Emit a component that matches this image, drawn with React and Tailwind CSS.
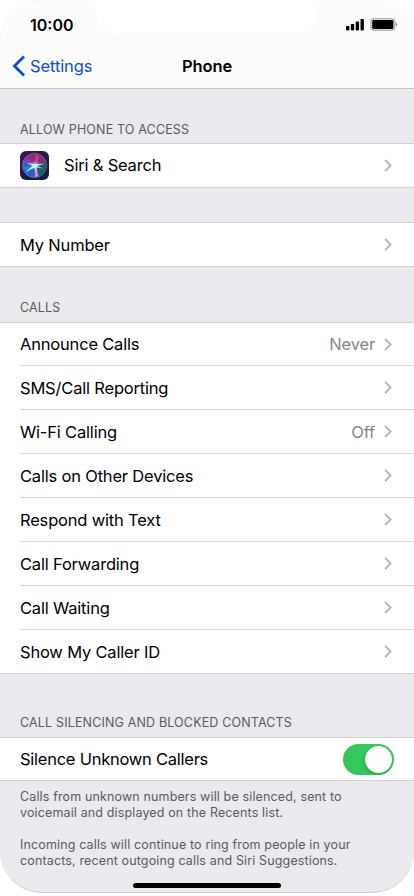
import React from 'react';

const callRows = [
  { label: 'Announce Calls', value: 'Never' },
  { label: 'SMS/Call Reporting' },
  { label: 'Wi-Fi Calling', value: 'Off' },
  { label: 'Calls on Other Devices' },
  { label: 'Respond with Text' },
  { label: 'Call Forwarding' },
  { label: 'Call Waiting' },
  { label: 'Show My Caller ID' },
];

function Chevron() {
  return (
    <svg width="8" height="13" viewBox="0 0 8 13" fill="none" className="shrink-0">
      <path d="M1.1 1L6.6 6.5L1.1 12" stroke="#b6b6b8" strokeWidth="1.9" />
    </svg>
  );
}

function SiriIcon() {
  return (
    <svg width="29" height="29" viewBox="0 0 29 29" className="mr-[15px] shrink-0">
      <defs>
        <linearGradient id="siriBg" x1="0" y1="0" x2="1" y2="1">
          <stop offset="0" stopColor="#43105a" />
          <stop offset="0.45" stopColor="#251d49" />
          <stop offset="1" stopColor="#101f3c" />
        </linearGradient>
        <linearGradient id="siriOrb" x1="0.1" y1="0.9" x2="0.7" y2="0.05">
          <stop offset="0" stopColor="#1567c0" />
          <stop offset="0.4" stopColor="#3f58b8" />
          <stop offset="0.65" stopColor="#8b2c8e" />
          <stop offset="1" stopColor="#8f2468" />
        </linearGradient>
        <radialGradient id="siriGlow">
          <stop offset="0" stopColor="#fff" />
          <stop offset="0.4" stopColor="#c4e8f5" stopOpacity="0.5" />
          <stop offset="1" stopColor="#63bdea" stopOpacity="0" />
        </radialGradient>
      </defs>
      <rect width="29" height="29" rx="6" fill="url(#siriBg)" />
      <circle cx="14.5" cy="14.5" r="12" fill="url(#siriOrb)" stroke="#777fa0" strokeWidth="0.8" />
      <path d="M15 14L25.8 11A12 12 0 0 1 19.5 25.5Z" fill="#15605f" opacity="0.85" />
      <path d="M15 14L15.5 4L19 5L17 14Z" fill="#d63f8e" opacity="0.85" />
      <path d="M15 14L7 6.5L4.5 11Z" fill="#9b3fb4" opacity="0.7" />
      <path d="M14 14L3.5 16L7 23Z" fill="#258be0" opacity="0.75" />
      <path d="M14.5 15L15 26L18.5 25Z" fill="#e68ad8" opacity="0.9" />
      <circle cx="15" cy="14.3" r="5" fill="url(#siriGlow)" />
      <path d="M6.5 12L15 13L25 12.8L17 15L24 17.8L16.3 16.2L17.5 23L14.5 16.8L6 20.8L12.5 14.8Z" fill="#c9f7f3" opacity="0.9" />
    </svg>
  );
}

function Row({ label, value, icon, textPad = 'pt-px' }) {
  return (
    <div className="flex h-[43px] items-center pr-[22px]">
      {icon}
      <span className={`grow text-[16.5px] tracking-[-0.19px] text-black ${textPad}`}>{label}</span>
      {value && <span className={`mr-[9px] text-[16.5px] tracking-[-0.15px] text-[#858589] ${textPad}`}>{value}</span>}
      <Chevron />
    </div>
  );
}

function GroupTitle({ children }) {
  return <h2 className="pl-5 text-[12.5px] leading-4 font-normal tracking-[0.16px] text-[#59595d]">{children}</h2>;
}

function StatusBar() {
  return (
    <div className="flex h-11 items-start justify-between pr-4 pl-[30px]">
      <span className="mt-[15px] text-[16px] leading-5 font-semibold text-black">10:00</span>
      <div className="mt-[18px] flex gap-[6px]">
        <svg width="19" height="13" viewBox="0 0 19 13">
          <rect x="1" y="8" width="3.4" height="4.4" rx="0.8" />
          <rect x="5.8" y="6" width="3.4" height="6.4" rx="0.8" />
          <rect x="10.7" y="3.6" width="3.4" height="8.8" rx="0.8" />
          <rect x="15.5" y="1" width="3.4" height="11.4" rx="0.8" />
        </svg>
        <svg width="28" height="13" viewBox="0 0 28 13">
          <rect x="0.9" y="0.8" width="23.8" height="11.4" rx="3.2" fill="#fcfcfc" stroke="#b4b4b4" strokeWidth="1.5" />
          <rect x="2.2" y="2.1" width="21.2" height="8.8" rx="1.4" />
          <path d="M25.9 4.4Q27.2 5 27.2 6.5Q27.2 8 25.9 8.6Z" fill="#929292" />
        </svg>
      </div>
    </div>
  );
}

export default function App() {
  return (
    <div className="h-[896px] w-[414px] overflow-hidden bg-white font-['Inter',sans-serif]">
      <div className="relative h-[893px] overflow-hidden rounded-[42px] border-b border-[#cacacd] bg-[#eae9ee]">
        <header className="relative h-[89px] border-b border-[#c3c3c7] bg-[#fcfcfc]">
          {/* notch */}
          <svg width="414" height="34" viewBox="0 0 414 34" className="absolute top-0 left-0">
            <path d="M88 0Q96 0 96 9C96 25 103 33 120 33H294C311 33 318 25 318 9Q318 0 326 0Z" fill="#fff" />
          </svg>
          <div className="relative">
            <StatusBar />
            <nav className="grid h-11 grid-cols-3 items-center pr-3 pl-3">
              <div className="flex items-center text-[#0a4be0]">
                <svg width="14" height="22" viewBox="0 0 14 22" fill="none">
                  <path d="M12 1.5L2.5 11L12 20.5" stroke="currentColor" strokeWidth="2.8" />
                </svg>
                <span className="ml-1 text-[16.5px] tracking-[-0.1px]">Settings</span>
              </div>
              <h1 className="text-center text-[16.5px] font-semibold tracking-[-0.1px] text-black">Phone</h1>
            </nav>
          </div>
        </header>

        <main>
          <section className="pt-[33px]">
            <GroupTitle>ALLOW PHONE TO ACCESS</GroupTitle>
            <div className="mt-[5px] border-y border-[#cfcfd2] bg-white pl-5">
              <Row label="Siri & Search" icon={<SiriIcon />} textPad="pt-0" />
            </div>
          </section>

          <section className="mt-[34px] border-y border-[#cfcfd2] bg-white pl-5">
            <Row label="My Number" />
          </section>

          <section className="pt-[33px]">
            <GroupTitle>CALLS</GroupTitle>
            <div className="mt-[6px] border-t border-[#cfcfd2] bg-white">
              {callRows.map((row, i) => (
                <div
                  key={row.label}
                  className={i === callRows.length - 1 ? 'border-b border-[#cfcfd2] pl-5' : 'ml-5 border-b border-[#d6d6d8]'}
                >
                  <div className={i === 0 ? '-mb-px h-[43px]' : 'h-[43px]'}>
                    <Row {...row} textPad={i === 0 ? 'pt-0' : 'pt-px'} />
                  </div>
                </div>
              ))}
            </div>
          </section>

          <section className="pt-[41px]">
            <GroupTitle>CALL SILENCING AND BLOCKED CONTACTS</GroupTitle>
            <div className="mt-[6px] flex h-11 items-center justify-between border-y border-[#d3d3d6] bg-white pr-5 pl-5">
              <span className="text-[16.5px] tracking-[-0.25px] text-black">Silence Unknown Callers</span>
              <div className="flex h-[31px] w-[51px] items-center justify-end rounded-full bg-[#35c759] pr-[2px]">
                <div className="size-[27px] rounded-full bg-white shadow-[-1px_2px_3px_rgba(0,0,0,0.15)]" />
              </div>
            </div>
            <div className="mt-2 pl-5 text-[12.5px] leading-4 tracking-[0.14px] text-[#59595d]">
              <p>Calls from unknown numbers will be silenced, sent to<br />voicemail and displayed on the Recents list.</p>
              <p className="mt-4">Incoming calls will continue to ring from people in your<br />contacts, recent outgoing calls and Siri Suggestions.</p>
            </div>
          </section>
        </main>
        <div className="absolute bottom-[4px] left-[133px] h-[5px] w-[148px] rounded-full bg-black" />
      </div>
    </div>
  );
}
